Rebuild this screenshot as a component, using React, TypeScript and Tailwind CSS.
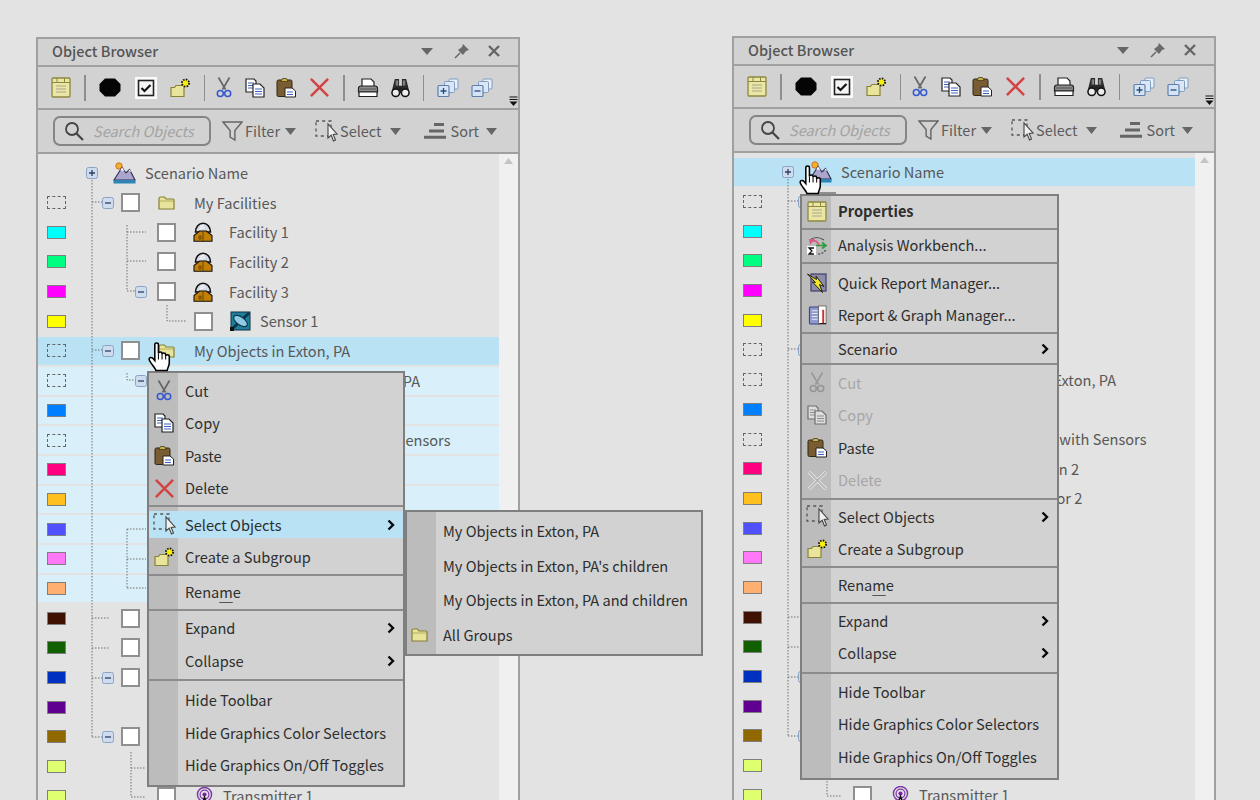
import type { ReactNode } from "react";

type IconProps = { className?: string };

const Properties = ({ className }: IconProps) => (
  <svg viewBox="0 0 20 21" className={`w-[20px] h-[21px] ${className ?? ""}`}>
    <rect x="1" y="1" width="18" height="19" rx="1" fill="#ebe6a4" stroke="#8d8840" strokeWidth="1.3" />
    <path d="M1 5.5H19M6 1V5.5M13.5 1V5.5" stroke="#8d8840" strokeWidth="1" fill="none" />
    <path d="M5 9H15M5 12H15M5 15H15" stroke="#a8a690" strokeWidth="1.2" />
  </svg>
);

const Octagon = () => (
  <svg viewBox="0 0 22 19" className="w-[22px] h-[19px]">
    <polygon points="6,0.5 16,0.5 21.5,6 21.5,13 16,18.5 6,18.5 0.5,13 0.5,6" fill="#050505" />
  </svg>
);

const CheckIcon = () => (
  <svg viewBox="0 0 22 22" className="w-[22px] h-[22px]">
    <rect width="22" height="22" fill="#fafafa" />
    <rect x="3.5" y="3.5" width="15" height="15" fill="#f4f4f4" stroke="#222" strokeWidth="1.6" />
    <path d="M6.5 11L9.5 14L15.5 8" stroke="#111" strokeWidth="2.2" fill="none" />
  </svg>
);

const NewFolder = () => (
  <svg viewBox="0 0 22 20" className="w-[22px] h-[20px]">
    <path d="M2 9.5H5.5L7 7.5H15V18.5H2Z" fill="#e8e49c" stroke="#8a8335" strokeWidth="1.2" />
    <circle cx="16.5" cy="5" r="3.6" fill="#f7ee10" stroke="#111" strokeWidth="1.8" strokeDasharray="1.6 1.2" />
  </svg>
);

const Scissors = ({ className }: IconProps) => (
  <svg viewBox="0 0 16 21" className={`w-[16px] h-[21px] ${className ?? ""}`}>
    <path d="M2.5 0.5L9.5 12.5M13.5 0.5L6.5 12.5" stroke="#666" strokeWidth="1.7" />
    <circle cx="4.3" cy="16.5" r="3" fill="none" stroke="#3358d0" strokeWidth="1.5" />
    <circle cx="11.7" cy="16.5" r="3" fill="none" stroke="#3358d0" strokeWidth="1.5" />
  </svg>
);

const Copy = ({ className }: IconProps) => (
  <svg viewBox="0 0 20 20" className={`w-[20px] h-[20px] ${className ?? ""}`}>
    <path d="M1 1H9L11 3V14H1Z" fill="#fff" stroke="#222" strokeWidth="1.2" />
    <path d="M3 5H9M3 7.5H9M3 10H9" stroke="#4664b8" strokeWidth="1" />
    <path d="M8 6H15L19 10V19H8Z" fill="#fff" stroke="#222" strokeWidth="1.2" />
    <path d="M10 11H17M10 13.5H17M10 16H17" stroke="#3f62c4" strokeWidth="1.1" />
  </svg>
);

const Paste = () => (
  <svg viewBox="0 0 20 21" className="w-[20px] h-[21px]">
    <rect x="1" y="3" width="15" height="16.5" rx="1.5" fill="#7a5c33" stroke="#2e2413" strokeWidth="1" />
    <path d="M5 4.5L6.5 1.5H10.5L12 4.5Z" fill="#c6b24a" stroke="#4a3d17" strokeWidth="0.8" />
    <path d="M9 11H16L19.5 14V20H9Z" fill="#fff" stroke="#222" strokeWidth="1" />
    <path d="M11 15H17M11 17.5H17" stroke="#3f62c4" strokeWidth="1.2" />
  </svg>
);

const RedX = () => (
  <svg viewBox="0 0 22 22" className="w-[21px] h-[21px]">
    <path d="M2 2L20 20M20 2L2 20" stroke="#d34343" strokeWidth="2.6" />
  </svg>
);

const GreyX = () => (
  <svg viewBox="0 0 22 22" className="w-[21px] h-[21px]">
    <path d="M2 2L20 20M20 2L2 20" stroke="#e9e9e9" strokeWidth="3.6" />
    <path d="M2 2L20 20M20 2L2 20" stroke="#b4b4b4" strokeWidth="1.7" />
  </svg>
);

const Printer = () => (
  <svg viewBox="0 0 22 20" className="w-[22px] h-[20px]">
    <path d="M5 8V1H14L17 4V8" fill="#fff" stroke="#222" strokeWidth="1.2" />
    <path d="M1.5 14V10.5Q1.5 8 4 8H18Q20.5 8 20.5 10.5V14Z" fill="#8d8d8d" stroke="#222" strokeWidth="1.2" />
    <path d="M2 14H20V18.5H2Z" fill="#fff" stroke="#222" strokeWidth="1.2" />
    <path d="M3 11H19" stroke="#555" strokeWidth="1" />
  </svg>
);

const Binoculars = () => (
  <svg viewBox="0 0 20 21" className="w-[19px] h-[20px]">
    <path d="M4 1H8.5V8H11.5V1H16L19 13H1Z" fill="#2a2a2a" />
    <path d="M5.5 2.5V8M7 2.5V8M13 2.5V8M14.5 2.5V8" stroke="#bbb" strokeWidth="0.8" />
    <circle cx="5" cy="15.5" r="4" fill="#ededed" stroke="#111" strokeWidth="1.6" />
    <circle cx="15" cy="15.5" r="4" fill="#ededed" stroke="#111" strokeWidth="1.6" />
    <rect x="8.5" y="10" width="3" height="6" fill="#222" />
  </svg>
);

const Stack = ({ minus }: { minus?: boolean }) => (
  <svg viewBox="0 0 22 20" className="w-[22px] h-[20px]">
    <rect x="12" y="1" width="9" height="10" rx="1" fill="#e8f0fa" stroke="#7f9cc2" />
    <rect x="7.5" y="3.5" width="10" height="11" rx="1" fill="#dbe7f6" stroke="#7f9cc2" />
    <rect x="1" y="7.5" width="11" height="11" rx="1" fill="#d5e3f5" stroke="#5f80ad" strokeWidth="1.2" />
    <path d={minus ? "M3.5 13H9.5" : "M3.5 13H9.5M6.5 10V16"} stroke="#274a7d" strokeWidth="1.3" />
  </svg>
);

const Overflow = () => (
  <svg viewBox="0 0 9 11" className="w-[9px] h-[11px]">
    <path d="M0.5 1H8.5M0.5 3.5H8.5" stroke="#111" strokeWidth="1.2" />
    <path d="M0.5 5.5H8.5L4.5 10Z" fill="#111" />
  </svg>
);

const Magnifier = () => (
  <svg viewBox="0 0 20 20" className="w-[20px] h-[20px]">
    <circle cx="8" cy="8" r="6" fill="none" stroke="#444" strokeWidth="1.8" />
    <path d="M12.5 12.5L19 19" stroke="#444" strokeWidth="2.2" />
  </svg>
);

const Funnel = () => (
  <svg viewBox="0 0 22 21" className="w-[21px] h-[20px]">
    <path d="M1 1H21L13.5 10V20L8.5 17V10Z" fill="none" stroke="#666" strokeWidth="1.5" />
  </svg>
);

const SelectIcon = () => (
  <svg viewBox="0 0 23 23" className="w-[23px] h-[23px]">
    <rect x="1" y="1" width="15" height="15" fill="none" stroke="#555" strokeWidth="1.3" strokeDasharray="3 3.2" />
    <path d="M13 4V18L16.2 15.2L18.5 21L20.5 20L18.2 14.5L22 14Z" fill="#f0f0f0" stroke="#444" strokeWidth="1.1" />
  </svg>
);

const SortIcon = () => (
  <svg viewBox="0 0 22 16" className="w-[22px] h-[16px]">
    <path d="M10 1.5H20M5 8H20M0 14.2H22" stroke="#666" strokeWidth="3" />
  </svg>
);

const Caret = () => (
  <svg viewBox="0 0 11 7" className="w-[11px] h-[7px]">
    <path d="M0 0H11L5.5 7Z" fill="#666" />
  </svg>
);

const Expander = ({ plus }: { plus?: boolean }) => (
  <svg viewBox="0 0 12 12" className="w-[12px] h-[12px]">
    <rect x="0.5" y="0.5" width="11" height="11" rx="2" fill="#cfdcee" stroke="#8aa2c4" />
    <path d={plus ? "M3 6H9M6 3V9" : "M3 6H9"} stroke="#2b3f63" strokeWidth="1.3" />
  </svg>
);

const Folder = () => (
  <svg viewBox="0 0 17 14" className="w-[17px] h-[14px]">
    <path d="M1 13V2.5Q1 1 2.5 1H6.5L8 3H15Q16 3 16 4V13Z" fill="#e8e49c" stroke="#857f33" strokeWidth="1.2" />
    <path d="M1 5H16" stroke="#a6a04e" strokeWidth="0.8" />
  </svg>
);

const Facility = () => (
  <svg viewBox="0 0 20 20" className="w-[20px] h-[20px]">
    <path d="M2.5 10A7.5 8.8 0 0 1 17.5 10Z" fill="#d7dbe6" stroke="#111" strokeWidth="1.6" />
    <path d="M7 5L11 3M6.5 7.5L12 5" stroke="#fff" strokeWidth="1" />
    <path d="M1 19.3V13.5L6.5 9H13.5L19 13.5V19.3Z" fill="#c47f05" stroke="#111" strokeWidth="1.1" />
    <path d="M10 9V19M6 14H8V17H6Z" stroke="#5f3e00" strokeWidth="0.9" fill="none" />
  </svg>
);

const Sensor = () => (
  <svg viewBox="0 0 21 20" className="w-[21px] h-[20px]">
    <rect x="1" y="1" width="19" height="18" fill="#1f7f9f" stroke="#12303f" strokeWidth="1" />
    <path d="M2 18L19 2" stroke="#0e3547" strokeWidth="3" />
    <ellipse cx="10.5" cy="10" rx="8" ry="4" transform="rotate(35 10.5 10)" fill="#8fc9e4" stroke="#0e3547" strokeWidth="1.2" />
    <rect x="0" y="16" width="4" height="4" fill="#111" />
  </svg>
);

const Scenario = () => (
  <svg viewBox="0 0 23 22" className="w-[23px] h-[22px]">
    <circle cx="6" cy="4" r="3.2" fill="#f0b030" stroke="#d07020" strokeWidth="1" />
    <path d="M1 18L9 5.5L13 11L16.5 7.5L22 18Z" fill="#aaa6cd" stroke="#2e2c52" strokeWidth="1.1" />
    <path d="M7.2 8.5L9 5.5L11.5 9L9.5 8.5ZM15.5 9L16.5 7.5L18.5 10Z" fill="#fff" />
    <rect x="0.5" y="18" width="22" height="3.5" fill="#2d84b5" />
  </svg>
);

const Transmitter = () => (
  <svg viewBox="0 0 18 20" className="w-[17px] h-[19px]">
    <circle cx="9" cy="8" r="7.5" fill="none" stroke="#7d37a8" strokeWidth="1.5" />
    <circle cx="9" cy="8" r="4.7" fill="none" stroke="#7d37a8" strokeWidth="1.3" />
    <circle cx="9" cy="8" r="2.2" fill="#7d1fa8" />
    <path d="M6 19L9 11L12 19" stroke="#111" strokeWidth="1.6" fill="none" />
  </svg>
);

const Analysis = () => (
  <svg viewBox="0 0 21 21" className="w-[21px] h-[21px]">
    <rect x="0" y="11" width="9" height="9" fill="#fff" />
    <path d="M3 5Q9 0 17 5" fill="none" stroke="#555" strokeWidth="1.2" />
    <path d="M3 10L2 4L8 4Z" fill="#d85a80" />
    <path d="M6 6Q10 5 12 10" fill="none" stroke="#d85a80" strokeWidth="1.8" />
    <path d="M9 10.5H18M15 7.5L19 10.5L15 13.5" fill="none" stroke="#2d9a3f" strokeWidth="1.6" />
    <path d="M7 13H2L5 16L2 19H7" fill="none" stroke="#111" strokeWidth="1.3" />
    <path d="M11 19Q17 19 19 14" fill="none" stroke="#444" strokeWidth="1.2" strokeDasharray="2 1.5" />
  </svg>
);

const QuickReport = () => (
  <svg viewBox="0 0 20 20" className="w-[20px] h-[20px]">
    <rect x="4" y="1" width="15" height="17" fill="#8d8dab" stroke="#3f3f68" strokeWidth="1.2" />
    <path d="M0.5 1L9.5 6.5L9 3L17 13.5L12.5 11.5L15.5 19.5L5.5 9L8.5 9.5Z" fill="#f4e62a" stroke="#111" strokeWidth="0.9" />
  </svg>
);

const ReportGraph = () => (
  <svg viewBox="0 0 20 21" className="w-[19px] h-[20px]">
    <rect x="1.5" y="2" width="11" height="18" rx="1" fill="#8f98cf" stroke="#3a427f" strokeWidth="1.1" />
    <path d="M4 6H10M4 9H10M4 12H10M4 15H10" stroke="#e8e8f5" strokeWidth="1.1" />
    <rect x="11" y="1" width="8" height="19" fill="#fff" stroke="#555" strokeWidth="0.8" />
    <rect x="15" y="5" width="2" height="14" fill="#d03030" />
    <path d="M12 19.5H19" stroke="#111" strokeWidth="1" />
  </svg>
);

const Chevron = () => (
  <svg viewBox="0 0 8 12" className="w-[8px] h-[12px]">
    <path d="M1.5 1.5L6 6L1.5 10.5" fill="none" stroke="#0a0a0a" strokeWidth="2.4" />
  </svg>
);

const Hand = () => (
  <svg viewBox="0 0 24 30" className="w-[25px] h-[31px]">
    <path
      d="M6.5 3.5C6.5 1.3 10 1.3 10 3.5V12C10 10.2 13.5 10.2 13.5 12V13C13.5 11.2 17 11.2 17 13V14.5C17 12.9 20.5 12.9 20.5 14.5V21C20.5 24 19 25.5 18.5 28.5H7.5C7.2 26 1 20.5 1 17.5C1 15.5 3.5 15.5 4.8 17L6.5 19Z"
      fill="#fff"
      stroke="#000"
      strokeWidth="1.5"
    />
    <path d="M10 12V18M13.5 13V18M17 14.5V18" stroke="#000" strokeWidth="1" />
  </svg>
);

const Sep = () => <div className="w-[1.5px] h-[26px] bg-[#8e8e8e]" />;

const Toolbar = () => (
  <div className="h-[43px] flex items-center border-b-2 border-[#a0a0a0] shrink-0">
    <div className="ml-[13px]"><Properties /></div>
    <div className="ml-[13px]"><Sep /></div>
    <div className="ml-[13px]"><Octagon /></div>
    <div className="ml-[14px]"><CheckIcon /></div>
    <div className="ml-[12px]"><NewFolder /></div>
    <div className="ml-[13px]"><Sep /></div>
    <div className="ml-[11px]"><Scissors /></div>
    <div className="ml-[13px]"><Copy /></div>
    <div className="ml-[11px]"><Paste /></div>
    <div className="ml-[13px]"><RedX /></div>
    <div className="ml-[13px]"><Sep /></div>
    <div className="ml-[12px]"><Printer /></div>
    <div className="ml-[12px]"><Binoculars /></div>
    <div className="ml-[13px]"><Sep /></div>
    <div className="ml-[13px]"><Stack /></div>
    <div className="ml-[12px]"><Stack minus /></div>
    <div className="ml-[16px] self-end mb-[1px]"><Overflow /></div>
  </div>
);

const SearchBar = () => (
  <div className="h-[44px] flex items-center border-b-2 border-[#a0a0a0] text-[14.5px] text-[#5c5c5c] shrink-0">
    <div className="ml-[15px] w-[158px] h-[30px] flex items-center rounded-[7px] border-2 border-[#858585] pl-[9px]">
      <Magnifier />
      <span className="ml-[9px] italic text-[#a3a3a3]">Search Objects</span>
    </div>
    <div className="ml-[11px]"><Funnel /></div>
    <span className="ml-[2px]">Filter</span>
    <div className="ml-[5px]"><Caret /></div>
    <div className="ml-[19px]"><SelectIcon /></div>
    <span className="ml-[2px]">Select</span>
    <div className="ml-[8px]"><Caret /></div>
    <div className="ml-[23px]"><SortIcon /></div>
    <span className="ml-[5px]">Sort</span>
    <div className="ml-[7px]"><Caret /></div>
  </div>
);

type Row = {
  level: 0 | 1 | 2 | 3;
  swatch?: string;
  dashed?: boolean;
  exp?: boolean;
  plus?: boolean;
  noBox?: boolean;
  icon: ReactNode;
  cell: string;
  text: string;
};

const rows: Row[] = [
  { level: 0, exp: true, plus: true, noBox: true, icon: <Scenario />, cell: "w-[32px]", text: "Scenario Name" },
  { level: 1, dashed: true, exp: true, icon: <Folder />, cell: "w-[54px] pl-[18px]", text: "My Facilities" },
  { level: 2, swatch: "bg-[#00ffff]", icon: <Facility />, cell: "w-[53px] pl-[17px]", text: "Facility 1" },
  { level: 2, swatch: "bg-[#00ff80]", icon: <Facility />, cell: "w-[53px] pl-[17px]", text: "Facility 2" },
  { level: 2, swatch: "bg-[#ff00ff]", exp: true, icon: <Facility />, cell: "w-[53px] pl-[17px]", text: "Facility 3" },
  { level: 3, swatch: "bg-[#ffff00]", icon: <Sensor />, cell: "w-[47px] pl-[17px]", text: "Sensor 1" },
  { level: 1, dashed: true, exp: true, icon: <Folder />, cell: "w-[54px] pl-[18px]", text: "My Objects in Exton, PA" },
  { level: 2, dashed: true, exp: true, icon: <Folder />, cell: "w-[53px] pl-[17px]", text: "Objects Located in Exton, PA" },
  { level: 3, swatch: "bg-[#0080ff]", icon: <Sensor />, cell: "w-[47px] pl-[17px]", text: "Sensor 3" },
  { level: 3, dashed: true, icon: <Folder />, cell: "w-[47px] pl-[17px]", text: "Town Facilities with Sensors" },
  { level: 3, swatch: "bg-[#ff0080]", icon: <Facility />, cell: "w-[47px] pl-[17px]", text: "Facilities Station 2" },
  { level: 3, swatch: "bg-[#ffc020]", icon: <Sensor />, cell: "w-[47px] pl-[17px]", text: "Mountain Sensor 2" },
  { level: 2, swatch: "bg-[#5050ff]", icon: <Facility />, cell: "w-[53px] pl-[17px]", text: "Facility 4" },
  { level: 2, swatch: "bg-[#ff78f8]", icon: <Facility />, cell: "w-[53px] pl-[17px]", text: "Facility 5" },
  { level: 2, swatch: "bg-[#ffb070]", icon: <Facility />, cell: "w-[53px] pl-[17px]", text: "Facility 6" },
  { level: 1, swatch: "bg-[#401000]", icon: <Folder />, cell: "w-[54px] pl-[18px]", text: "Aircraft" },
  { level: 1, swatch: "bg-[#106000]", icon: <Folder />, cell: "w-[54px] pl-[18px]", text: "Ships" },
  { level: 1, swatch: "bg-[#0030c0]", exp: true, icon: <Folder />, cell: "w-[54px] pl-[18px]", text: "Satellites" },
  { level: 2, swatch: "bg-[#600090]", icon: <Facility />, cell: "w-[53px] pl-[17px]", text: "Satellite 1" },
  { level: 1, swatch: "bg-[#906800]", exp: true, icon: <Folder />, cell: "w-[54px] pl-[18px]", text: "Communications" },
  { level: 2, swatch: "bg-[#e0ff70]", icon: <Transmitter />, cell: "w-[47px] pl-[20px]", text: "Receiver 1" },
  { level: 2, swatch: "bg-[#e0ff70]", icon: <Transmitter />, cell: "w-[47px] pl-[20px]", text: "Transmitter 1" },
];

const leadClass = { 0: "w-[47px] pr-[15px]", 1: "w-[55px] pr-[7px]", 2: "w-[91px] pr-[10px]", 3: "w-[128px]" };

// tree connector lines, coordinates are relative to the tree area
const Connectors = () => (
  <svg className="absolute left-0 top-0 w-[461px] h-[650px] pointer-events-none" fill="none" stroke="#707070" strokeWidth="1" strokeDasharray="1.5 1.5">
    <path d="M54 26V584M54 48H64M54 196H64M54 464H72M54 494H72M54 524H64M54 583H64" />
    <path d="M89 71V137H97M89 78H108M89 107H108" />
    <path d="M129 151V167H149" />
    <path d="M89 219V226H97M89 375V434M89 375H108M89 405H108M89 434H108" />
    <path d="M93 598V643H108M93 614H108" />
  </svg>
);

const TreeRow = ({ row, fill }: { row: Row; fill: string }) => (
  <div className="h-[29.7px] py-[1px]">
    <div className={`h-full flex items-center ${fill}`}>
      <div className="w-[19px] h-[13px] ml-[9px] shrink-0">
        {row.level > 0 && (
          <div className={`w-full h-full border-[1.5px] ${row.dashed ? "border-dashed border-[#666]" : `border-[#7e7e7e] ${row.swatch}`}`} />
        )}
      </div>
      <div className={`flex justify-end shrink-0 ${leadClass[row.level]}`}>
        {row.exp && <Expander plus={row.plus} />}
      </div>
      {!row.noBox && <div className="w-[19px] h-[19px] bg-white border-2 border-[#8f8f8f] shrink-0" />}
      <div className={`flex items-center shrink-0 ${row.cell}`}>{row.icon}</div>
      <span className="whitespace-nowrap text-[14.6px] text-[#585858]">{row.text}</span>
    </div>
  </div>
);

const MenuRow = ({ icon, label, arrow, active, disabled, bold }: { icon?: ReactNode; label: ReactNode; arrow?: boolean; active?: boolean; disabled?: boolean; bold?: boolean }) => (
  <div className="h-[32.4px] flex items-center py-[2.7px]">
    <div className={`w-full h-full flex items-center ${active ? "bg-[#b9e2f5]" : ""}`}>
      <div className="w-[30px] flex justify-center shrink-0">{icon}</div>
      <span className={`ml-[6px] whitespace-nowrap text-[14.6px] ${disabled ? "text-[#a6a6a6]" : "text-[#2e2e2e]"} ${bold ? "font-semibold" : ""}`}>{label}</span>
      {arrow && <div className="ml-auto mr-[8px]"><Chevron /></div>}
    </div>
  </div>
);

const MenuSep = ({ className }: { className: string }) => <div className={`h-[2px] bg-[#8c8c8c] ${className}`} />;

const menuClass = "absolute z-10 border-2 border-[#7f7f7f] bg-[linear-gradient(to_right,#bcbcbc_29px,#d2d2d2_29px)]";

const Rename = <>Rena<span className="underline underline-offset-4 decoration-[#555]">m</span>e</>;

const TailItems = ({ gaps, active }: { gaps: string[]; active?: boolean }) => (
  <>
    <MenuRow icon={<SelectIcon />} label="Select Objects" arrow active={active} />
    <MenuRow icon={<NewFolder />} label="Create a Subgroup" />
    <MenuSep className={gaps[0]} />
    <MenuRow label={Rename} />
    <MenuSep className={gaps[1]} />
    <MenuRow label="Expand" arrow />
    <MenuRow label="Collapse" arrow />
    <MenuSep className={gaps[2]} />
    <MenuRow label="Hide Toolbar" />
    <MenuRow label="Hide Graphics Color Selectors" />
    <MenuRow label="Hide Graphics On/Off Toggles" />
  </>
);

const subItem = "ml-[6px] text-[14.6px] text-[#2e2e2e] whitespace-nowrap";

const LeftMenu = () => (
  <>
    <div className={`${menuClass} left-[109px] top-[332px] w-[258px] pt-[1.8px] pb-[4px]`}>
      <MenuRow icon={<Scissors />} label="Cut" />
      <MenuRow icon={<Copy />} label="Copy" />
      <MenuRow icon={<Paste />} label="Paste" />
      <MenuRow icon={<RedX />} label="Delete" />
      <MenuSep className="mt-[0.6px] mb-[1.8px]" />
      <TailItems active gaps={["mt-[0.6px] -mb-[0.2px]", "mt-[0.8px] mb-[0.8px]", "mt-[2.4px] mb-[2.8px]"]} />
    </div>
    <div className={`${menuClass} left-[367px] top-[471px] w-[298px] h-[146px] flex flex-col justify-center`}>
      <div className="h-[34.5px] flex items-center"><div className="w-[30px]" /><span className={subItem}>My Objects in Exton, PA</span></div>
      <div className="h-[34.5px] flex items-center"><div className="w-[30px]" /><span className={subItem}>My Objects in Exton, PA's children</span></div>
      <div className="h-[34.5px] flex items-center"><div className="w-[30px]" /><span className={subItem}>My Objects in Exton, PA and children</span></div>
      <div className="h-[34.5px] flex items-center"><div className="w-[30px] flex justify-center pr-[5px]"><Folder /></div><span className={subItem}>All Groups</span></div>
    </div>
    <div className="absolute z-20 left-[110px] top-[302px]"><Hand /></div>
  </>
);

const RightMenu = () => (
  <>
    <div className={`${menuClass} left-[66px] top-[156px] w-[259px] pb-[5px]`}>
      <div className="-mt-[1.2px]"><MenuRow icon={<Properties />} label="Properties" bold /></div>
      <MenuSep className="mt-[0.8px] -mb-[1.2px]" />
      <MenuRow icon={<Analysis />} label="Analysis Workbench..." />
      <MenuSep className="mt-[0.8px] mb-[2.8px]" />
      <MenuRow icon={<QuickReport />} label="Quick Report Manager..." />
      <MenuRow icon={<ReportGraph />} label="Report & Graph Manager..." />
      <MenuSep className="mt-[0.4px] -mb-[1.2px]" />
      <MenuRow label="Scenario" arrow />
      <MenuSep className="-mt-[2.2px] mb-[1.8px]" />
      <MenuRow icon={<Scissors className="grayscale opacity-40" />} label="Cut" disabled />
      <MenuRow icon={<Copy className="grayscale opacity-50" />} label="Copy" disabled />
      <MenuRow icon={<Paste />} label="Paste" />
      <MenuRow icon={<GreyX />} label="Delete" disabled />
      <MenuSep className="mt-[1.6px] mb-[0.8px]" />
      <TailItems gaps={["mt-[0.9px] mb-[0.3px]", "mt-[0.8px] mb-[0.8px]", "mt-[2.7px] mb-[1.5px]"]} />
    </div>
    <div className="absolute z-20 left-[65px] top-[126px]"><Hand /></div>
  </>
);

const Panel = ({ className, selected, lit, menu }: { className: string; selected: number; lit?: number[]; menu: ReactNode }) => (
  <div className={`relative w-[484px] h-[800px] shrink-0 flex flex-col bg-[#d2d2d2] border-2 border-[#a0a0a0] ${className}`}>
    <div className="h-[28px] flex items-center pl-[14px] pr-[18px] pb-[2px] border-b-2 border-[#a0a0a0] shrink-0">
      <span className="text-[14.5px] font-medium text-[#555]">Object Browser</span>
      <svg viewBox="0 0 12 7" className="w-[12px] h-[7px] ml-auto"><path d="M0 0H12L6 7Z" fill="#666" /></svg>
      <svg viewBox="0 0 16 16" className="w-[16px] h-[16px] ml-[21px]">
        <path d="M9 1L15 7L12 8L9 12L4 7L8 4Z" fill="#6a6a6a" />
        <path d="M6 10L1 15" stroke="#6a6a6a" strokeWidth="1.6" />
      </svg>
      <svg viewBox="0 0 12 12" className="w-[12px] h-[12px] ml-[18px]"><path d="M1 1L11 11M11 1L1 11" stroke="#666" strokeWidth="2.4" /></svg>
    </div>
    <Toolbar />
    <SearchBar />
    <div className="relative flex-1 flex bg-[#e3e3e3] overflow-hidden">
      <div className="w-[461px] pt-[4px] shrink-0">
        {rows.map((row, i) => (
          <TreeRow key={row.text} row={row} fill={i === selected ? "bg-[#b9e2f5]" : lit?.includes(i) ? "bg-[#d9f0fa]" : ""} />
        ))}
      </div>
      <Connectors />
      <div className="w-[19px] bg-[#f0f0f0] flex justify-center pt-[4px]">
        <svg viewBox="0 0 9 6" className="w-[9px] h-[6px]"><path d="M0 6H9L4.5 0Z" fill="#c4c4c4" /></svg>
      </div>
    </div>
    {menu}
  </div>
);

export default function App() {
  return (
    <div className="w-[1260px] h-[800px] overflow-hidden bg-[#e3e3e3] flex items-start font-['Noto_Sans_CJK_SC','Noto_Sans',sans-serif]">
      <Panel className="ml-[36px] mt-[37px]" selected={6} lit={[7, 8, 9, 10, 11, 12, 13, 14]} menu={<LeftMenu />} />
      <Panel className="ml-[212px] mt-[36px]" selected={0} menu={<RightMenu />} />
    </div>
  );
}
